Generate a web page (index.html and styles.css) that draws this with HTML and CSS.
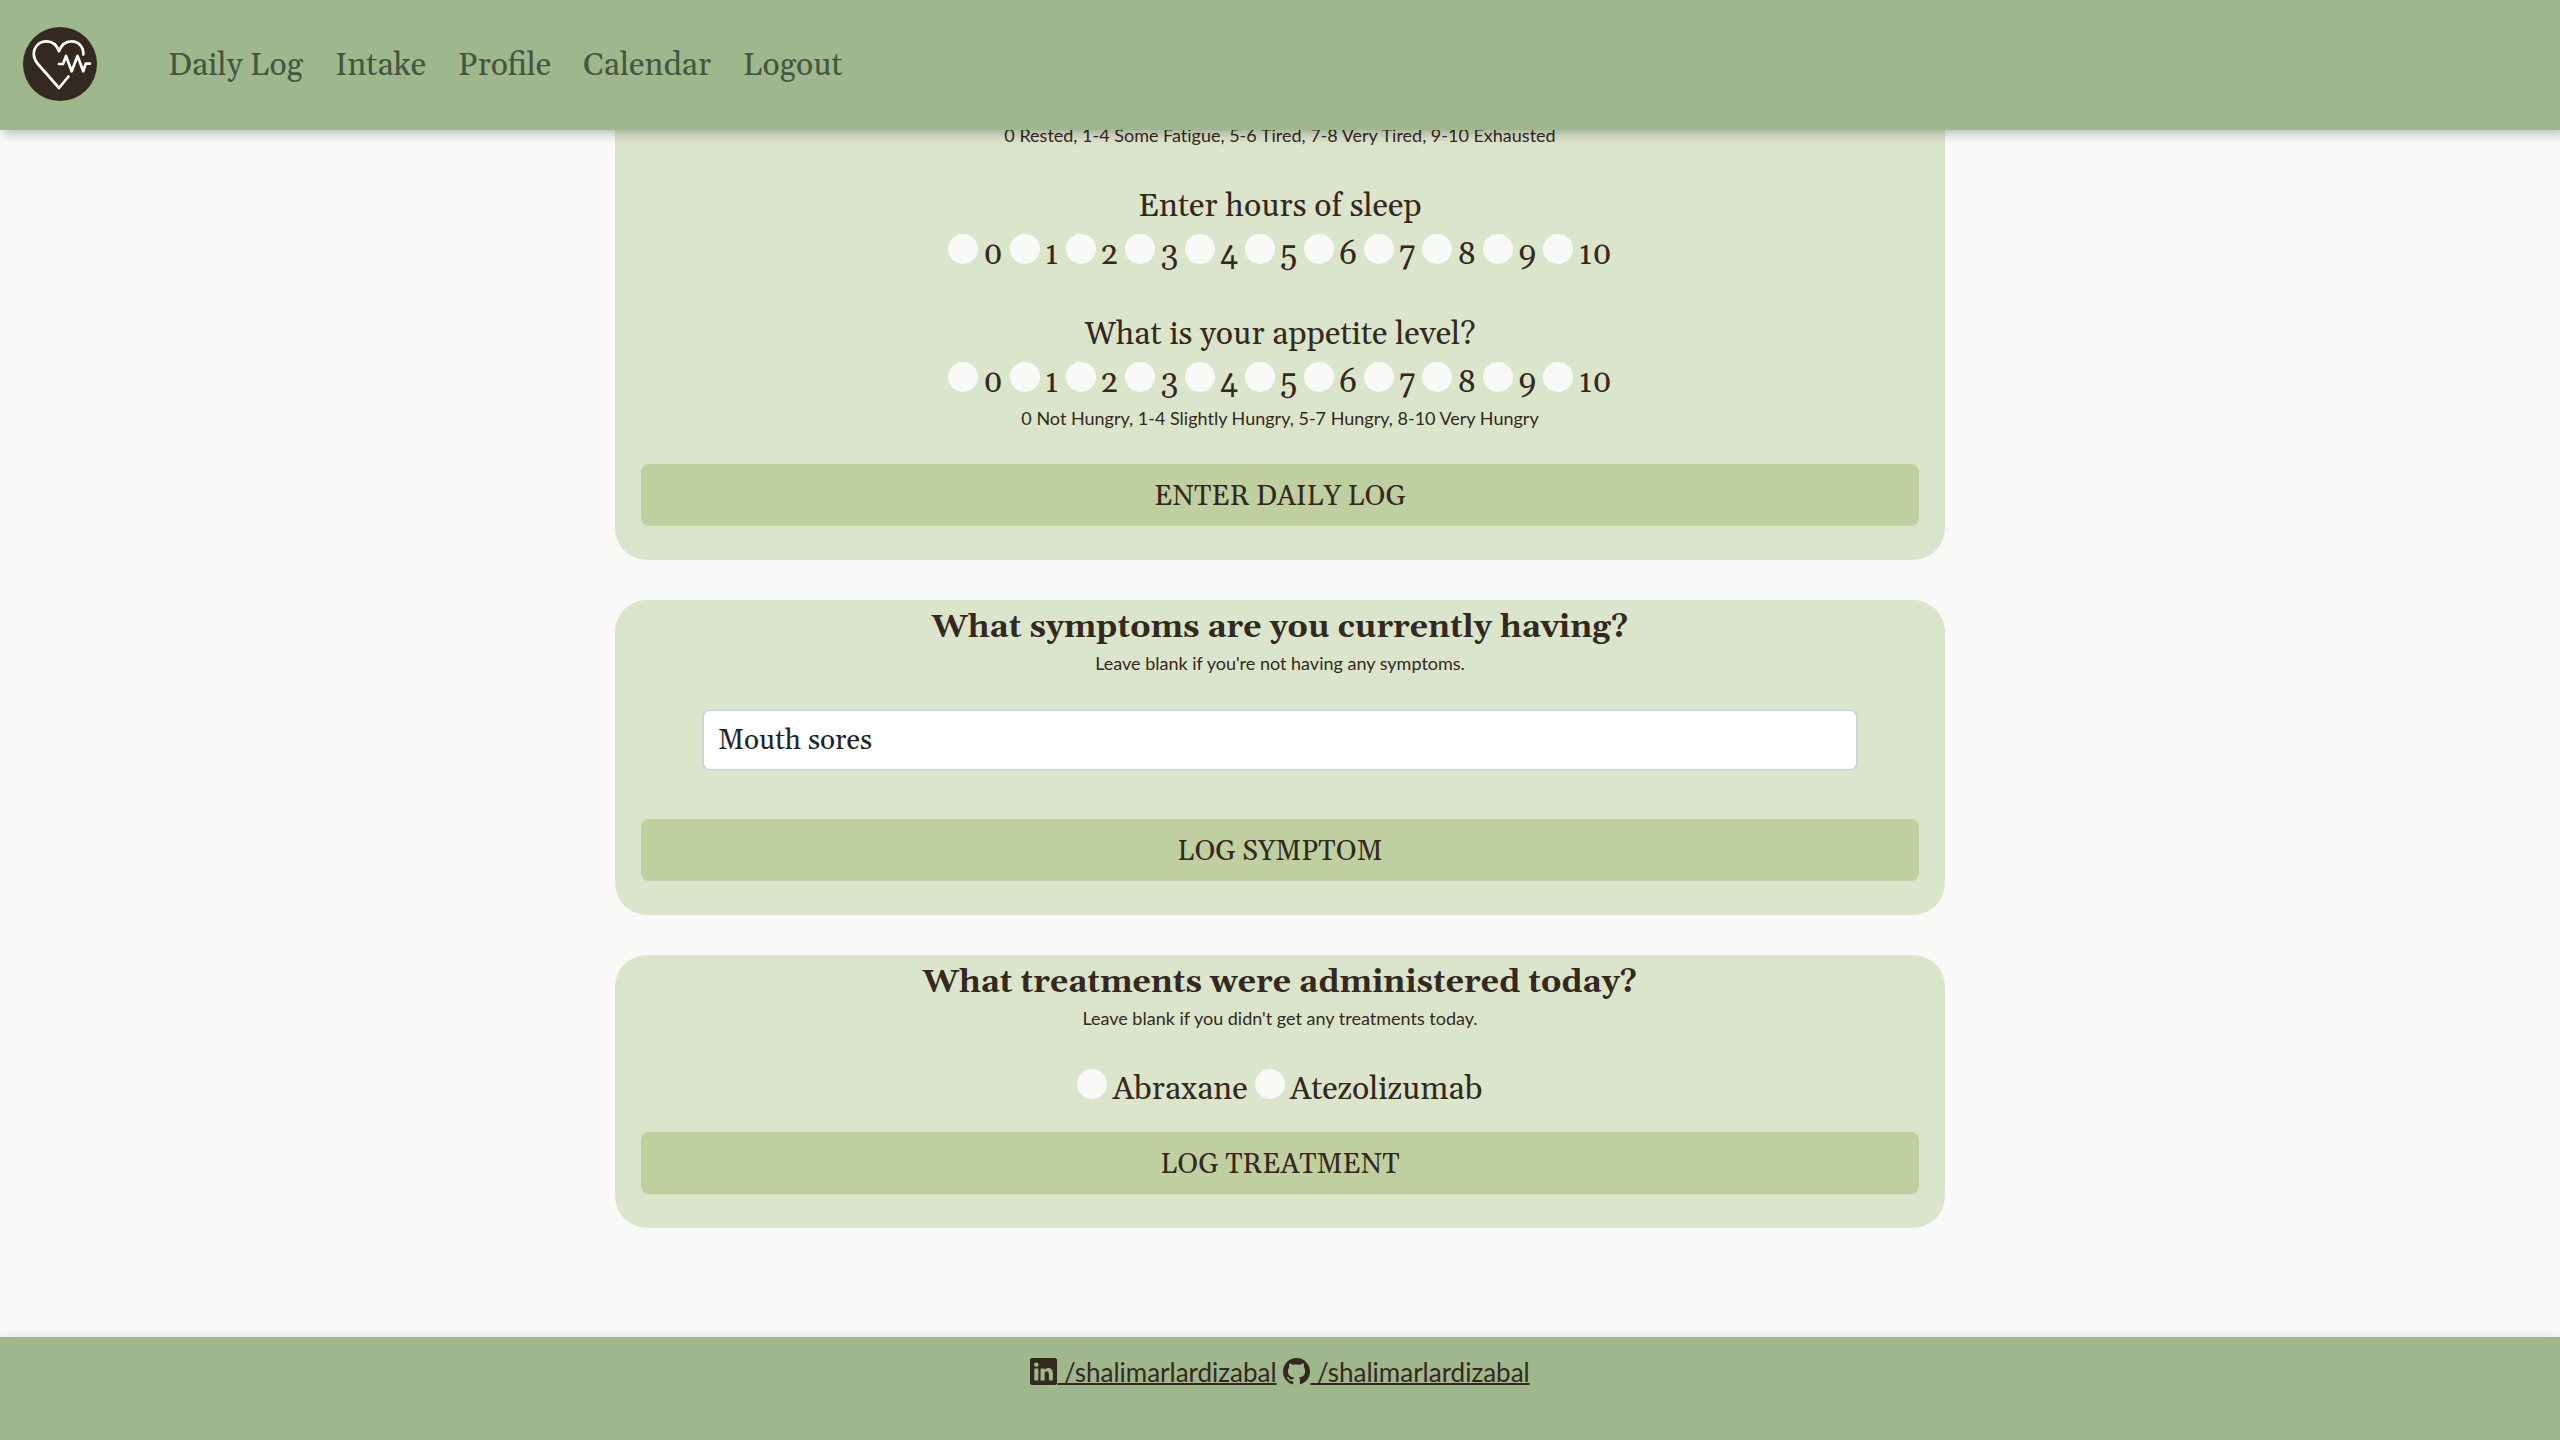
FILE: index.html
```html
<!DOCTYPE html>
<html lang="en">
<head>
<meta charset="utf-8">
<meta name="viewport" content="width=device-width, initial-scale=1">
<title>Daily Log</title>
<link rel="stylesheet" href="styles.css">
</head>
<body>
<header class="navbar">
  <a class="brand" href="#" aria-label="Home">
    <svg class="brand-logo" viewBox="0 0 74 74" aria-hidden="true">
      <circle cx="37" cy="37" r="37" fill="#352820"/>
      <g fill="none" stroke="#fff" stroke-width="2.7" stroke-linecap="round" stroke-linejoin="round">
        <path d="M45.5 49.5 L36 61 L14.5 36.5 C12 33.5 10.8 31 10.8 27 C10.8 20 16 14.4 23.5 14.4 C29 14.4 33.5 17.5 36 24.2 C38.5 17.5 43 14.4 48.5 14.4 C55.500 14.400 60.800 20 60.300 27.500"/>
        <path d="M36 37 H40 L43 29 L48.700 44.300 L54.500 29 L60.300 44.300 L62.700 36.700 H67"/>
      </g>
    </svg>
  </a>
  <nav class="nav-links" aria-label="Main">
    <a href="#">Daily Log</a>
    <a href="#">Intake</a>
    <a href="#">Profile</a>
    <a href="#">Calendar</a>
    <a href="#">Logout</a>
  </nav>
</header>

<main class="content">
  <form class="card card-continued">
    <p class="hint">0 Rested, 1-4 Some Fatigue, 5-6 Tired, 7-8 Very Tired, 9-10 Exhausted</p>

    <fieldset class="question">
      <legend>Enter hours of sleep</legend>
      <div class="options">
        <label><input type="radio" name="sleep" value="0">0</label>
        <label><input type="radio" name="sleep" value="1">1</label>
        <label><input type="radio" name="sleep" value="2">2</label>
        <label><input type="radio" name="sleep" value="3">3</label>
        <label><input type="radio" name="sleep" value="4">4</label>
        <label><input type="radio" name="sleep" value="5">5</label>
        <label><input type="radio" name="sleep" value="6">6</label>
        <label><input type="radio" name="sleep" value="7">7</label>
        <label><input type="radio" name="sleep" value="8">8</label>
        <label><input type="radio" name="sleep" value="9">9</label>
        <label><input type="radio" name="sleep" value="10">10</label>
      </div>
    </fieldset>

    <fieldset class="question">
      <legend>What is your appetite level?</legend>
      <div class="options">
        <label><input type="radio" name="appetite" value="0">0</label>
        <label><input type="radio" name="appetite" value="1">1</label>
        <label><input type="radio" name="appetite" value="2">2</label>
        <label><input type="radio" name="appetite" value="3">3</label>
        <label><input type="radio" name="appetite" value="4">4</label>
        <label><input type="radio" name="appetite" value="5">5</label>
        <label><input type="radio" name="appetite" value="6">6</label>
        <label><input type="radio" name="appetite" value="7">7</label>
        <label><input type="radio" name="appetite" value="8">8</label>
        <label><input type="radio" name="appetite" value="9">9</label>
        <label><input type="radio" name="appetite" value="10">10</label>
      </div>
      <p class="hint">0 Not Hungry, 1-4 Slightly Hungry, 5-7 Hungry, 8-10 Very Hungry</p>
    </fieldset>

    <button class="submit" type="button">ENTER DAILY LOG</button>
  </form>

  <form class="card">
    <h2><label for="symptom">What symptoms are you currently having?</label></h2>
    <p class="hint">Leave blank if you're not having any symptoms.</p>
    <div class="field">
      <input class="text-input" id="symptom" type="text" value="Mouth sores">
    </div>
    <button class="submit" type="button">LOG SYMPTOM</button>
  </form>

  <form class="card">
    <h2 id="treatment-title">What treatments were administered today?</h2>
    <p class="hint">Leave blank if you didn't get any treatments today.</p>
    <div class="options treatments" role="group" aria-labelledby="treatment-title">
      <label><input type="radio" name="treatment" value="abraxane">Abraxane</label>
      <label><input type="radio" name="treatment" value="atezolizumab">Atezolizumab</label>
    </div>
    <button class="submit" type="button">LOG TREATMENT</button>
  </form>
</main>

<footer class="footer">
  <a href="#"><svg class="icon" viewBox="0 0 16 16" aria-hidden="true"><path d="M0 1.146C0 .513.526 0 1.175 0h13.650C15.474 0 16 .513 16 1.146v13.708c0 .633-.526 1.146-1.175 1.146H1.175C.526 16 0 15.487 0 14.854V1.146zm4.943 12.248V6.169H2.542v7.225h2.401zm-1.200-8.212c.837 0 1.358-.554 1.358-1.248-.015-.709-.520-1.248-1.342-1.248-.822 0-1.359.540-1.359 1.248 0 .694.521 1.248 1.327 1.248h.016zm4.908 8.212V9.359c0-.216.016-.432.080-.586.173-.431.568-.878 1.232-.878.869 0 1.216.662 1.216 1.634v3.865h2.401V9.250c0-2.220-1.184-3.252-2.764-3.252-1.274 0-1.845.700-2.165 1.193v.025V6.169h-2.400c.030.678 0 7.225 0 7.225h2.400z"/></svg> /shalimarlardizabal</a>
  <a href="#"><svg class="icon" viewBox="0 0 16 16" aria-hidden="true"><path d="M8 0C3.580 0 0 3.580 0 8c0 3.540 2.290 6.530 5.470 7.590.4.070.55-.17.55-.38 0-.19-.01-.82-.01-1.490-2.010.37-2.530-.49-2.690-.94-.09-.23-.48-.94-.82-1.130-.28-.15-.68-.52-.01-.53.63-.01 1.080.58 1.230.82.72 1.210 1.870.87 2.330.66.07-.52.28-.87.51-1.070-1.780-.2-3.640-.89-3.640-3.950 0-.87.31-1.590.82-2.150-.08-.2-.36-1.020.08-2.120 0 0 .67-.21 2.200.82.64-.18 1.320-.27 2-.27.68 0 1.360.09 2 .27 1.530-1.040 2.200-.82 2.200-.82.44 1.100.16 1.920.08 2.120.51.56.82 1.270.82 2.150 0 3.070-1.870 3.750-3.650 3.950.29.25.54.73.54 1.480 0 1.070-.01 1.930-.01 2.200 0 .21.15.46.55.38A8.012 8.012 0 0 0 16 8c0-4.420-3.580-8-8-8z"/></svg> /shalimarlardizabal</a>
</footer>
</body>
</html>
```
FILE: styles.css
```css
:root {
  --ink: #352820;
  --bar: #9fb78d;
  --card: #dbe5cb;
  --button: #bfcf9f;
  --paper: #f9faf8;
  --serif: Gelasio, Georgia, "Liberation Serif", serif;
  --sans: Lato, "Liberation Sans", sans-serif;
}

* {
  box-sizing: border-box;
}

body {
  display: flex;
  flex-direction: column;
  min-height: 100vh;
  margin: 0;
  background: var(--paper);
  color: var(--ink);
  font: 32px/48px var(--serif);
}

h2,
p,
fieldset,
legend {
  margin: 0;
  padding: 0;
  border: 0;
}

.navbar {
  position: sticky;
  top: 0;
  z-index: 1;
  display: flex;
  align-items: center;
  gap: 71px;
  padding: 27px 23px 29px;
  background: var(--bar);
  box-shadow: 4px 4px 10px rgba(0, 0, 0, 0.25);
}

.brand-logo {
  display: block;
  width: 74px;
  height: 74px;
}

.nav-links {
  display: flex;
  flex-wrap: wrap;
  gap: 32px;
  padding-top: 4px;
}

.nav-links a {
  color: #475540;
  text-decoration: none;
}

.content {
  display: flex;
  flex: 1;
  flex-direction: column;
  gap: 40px;
  width: 52%;
  min-width: 720px;
  max-width: 1330px;
  margin: 0 auto;
  padding-bottom: 109px;
}

.card {
  padding: 4px 26px 34px;
  border-radius: 32px;
  background: var(--card);
  text-align: center;
}

/* The first card scrolls under the sticky bar. */
.card-continued {
  margin-top: -6px;
  padding-top: 0;
  border-radius: 0 0 32px 32px;
}

.card h2 {
  font-size: 32px;
  font-weight: 700;
}

.hint {
  margin-top: -2px;
  font: 18px/27px var(--sans);
  font-variant-ligatures: none;
}

.question {
  margin-top: 32px;
}

.hint + .question {
  margin-top: 34px;
}

.question legend {
  width: 100%;
}

.options {
  display: flex;
  flex-wrap: wrap;
  justify-content: center;
  gap: 7px;
}

.options label {
  display: flex;
  align-items: baseline;
  gap: 5px;
}

.options input {
  appearance: none;
  width: 30px;
  height: 30px;
  margin: 0;
  border-radius: 50%;
  background: var(--paper);
}

.options input:checked {
  border: 8px solid var(--ink);
}

.treatments {
  margin: 34px 0 -14px;
}

.field {
  margin: 32px 61px 48px;
}

.text-input {
  display: block;
  width: 100%;
  height: 62px;
  padding: 2px 14px 0;
  border: 2px solid #ced4da;
  border-radius: 8px;
  background: #fff;
  color: #212529;
  font: 28px var(--serif);
}

.submit {
  display: block;
  width: 100%;
  height: 62px;
  margin-top: 32px;
  padding: 4px 0 0;
  border: 0;
  border-radius: 8px;
  background: var(--button);
  color: var(--ink);
  font: 28px var(--serif);
}

.footer {
  padding: 16px 24px 48px;
  background: var(--bar);
  box-shadow: 0 0 10px rgba(0, 0, 0, 0.1);
  font: 26px/39px var(--sans);
  text-align: center;
}

.footer a {
  color: var(--ink);
  text-decoration-thickness: 2px;
  text-decoration-skip-ink: none;
}

.icon {
  width: 27px;
  height: 27px;
  fill: currentColor;
  vertical-align: -3px;
}
```
